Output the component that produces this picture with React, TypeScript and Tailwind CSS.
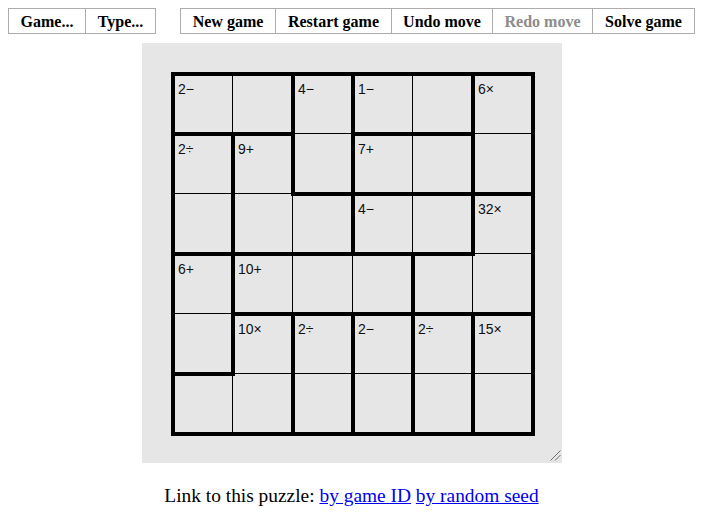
import React from "react";

const CAGES = [
  "AABCCD",
  "EFBGGD",
  "EFFHHI",
  "JKKKII",
  "JLMNOP",
  "LLMNOP",
];

const LABELS: { r: number; c: number; t: string }[] = [
  { r: 0, c: 0, t: "2\u2212" },
  { r: 0, c: 2, t: "4\u2212" },
  { r: 0, c: 3, t: "1\u2212" },
  { r: 0, c: 5, t: "6\u00d7" },
  { r: 1, c: 0, t: "2\u00f7" },
  { r: 1, c: 1, t: "9+" },
  { r: 1, c: 3, t: "7+" },
  { r: 2, c: 3, t: "4\u2212" },
  { r: 2, c: 5, t: "32\u00d7" },
  { r: 3, c: 0, t: "6+" },
  { r: 3, c: 1, t: "10+" },
  { r: 4, c: 1, t: "10\u00d7" },
  { r: 4, c: 2, t: "2\u00f7" },
  { r: 4, c: 3, t: "2\u2212" },
  { r: 4, c: 4, t: "2\u00f7" },
  { r: 4, c: 5, t: "15\u00d7" },
];

const N = 6;
const T = 60;
const B = 30;
const L = (i: number) => B + i * T;

function Board() {
  const thin: React.ReactNode[] = [];
  for (let i = 0; i <= N; i++) {
    thin.push(<rect key={"tv" + i} x={L(i)} y={L(0)} width={1} height={N * T + 1} fill="#000" />);
    thin.push(<rect key={"th" + i} x={L(0)} y={L(i)} width={N * T + 1} height={1} fill="#000" />);
  }
  const thick: React.ReactNode[] = [];
  const cage = (r: number, c: number) =>
    r < 0 || c < 0 || r >= N || c >= N ? "#" : CAGES[r][c];
  for (let r = 0; r <= N; r++) {
    for (let c = 0; c < N; c++) {
      if (cage(r - 1, c) !== cage(r, c)) {
        thick.push(
          <rect key={`h${r}-${c}`} x={L(c) - 1} y={L(r) - 1} width={T + 4} height={4} fill="#000" />
        );
      }
    }
  }
  for (let c = 0; c <= N; c++) {
    for (let r = 0; r < N; r++) {
      if (cage(r, c - 1) !== cage(r, c)) {
        thick.push(
          <rect key={`v${r}-${c}`} x={L(c) - 1} y={L(r) - 1} width={4} height={T + 4} fill="#000" />
        );
      }
    }
  }
  return (
    <svg width={420} height={420} viewBox="0 0 420 420" shapeRendering="crispEdges" className="block">
      <rect x={0} y={0} width={420} height={420} fill="#e6e6e6" />
      {thin}
      {thick}
      {LABELS.map((l) => (
        <text
          key={`${l.r}-${l.c}`}
          x={L(l.c) + 6}
          y={L(l.r) + 21}
          fontSize={14}
          fontFamily="'Liberation Sans', Arial, sans-serif"
          fill="#111"
        >
          {l.t}
        </text>
      ))}
    </svg>
  );
}

export default function App() {
  const btn =
    "h-[26px] flex items-center justify-center pt-[2px] border-[#acacac] bg-white font-bold text-[16px] whitespace-nowrap";
  return (
    <div
      className="w-[703px] h-[526px] bg-white overflow-hidden"
      style={{ fontFamily: "'Liberation Serif', 'Times New Roman', serif" }}
    >
      <div className="flex justify-center gap-[24px] pt-[8px]">
        <div className="flex">
          <div className={`${btn} w-[78px] border text-black`}>Game...</div>
          <div className={`${btn} w-[70px] border-y border-r text-black`}>Type...</div>
        </div>
        <div className="flex">
          <div className={`${btn} w-[96px] border text-black`}>New game</div>
          <div className={`${btn} w-[116px] border-y border-r text-black`}>Restart game</div>
          <div className={`${btn} w-[101px] border-y border-r text-black`}>Undo move</div>
          <div className={`${btn} w-[100px] border-y border-r text-[#8c8c8c]`}>Redo move</div>
          <div className={`${btn} w-[102px] border-y border-r text-black`}>Solve game</div>
        </div>
      </div>
      <div className="flex justify-center mt-[9px]">
        <div className="relative w-[420px] h-[420px] bg-[#e6e6e6]">
          <Board />
          <svg
            className="absolute right-[1px] bottom-[2px]"
            width={11}
            height={11}
            viewBox="0 0 11 11"
          >
            <line x1={10.5} y1={0.5} x2={0.5} y2={10.5} stroke="#6e6e6e" strokeWidth={1} />
            <line x1={10.5} y1={5} x2={5} y2={10.5} stroke="#6e6e6e" strokeWidth={1} />
          </svg>
        </div>
      </div>
      <p className="text-center text-[19.4px] mt-[18px] text-black">
        Link to this puzzle:{" "}
        <a href="#" className="text-[#0000ee] underline">
          by game ID
        </a>{" "}
        <a href="#" className="text-[#0000ee] underline">
          by random seed
        </a>
      </p>
    </div>
  );
}
